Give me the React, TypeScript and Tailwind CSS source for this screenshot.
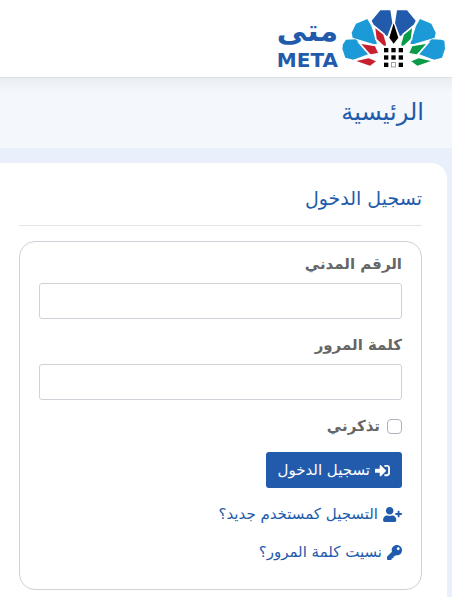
import { useState } from "react";
import { FaKey, FaSignInAlt, FaUserPlus } from "react-icons/fa";

function LogoMark() {
  return (
    <svg viewBox="240 27 312 177" className="h-[59px] w-[104px]" aria-hidden="true">
      {/* petals */}
      <g fill="#1b9ad7">
        <polygon points="241,146 243,133 252,119 281,118 322,153 325,158 318,163 274,179 250,173" />
        <polygon points="269,98 282,71 316,57 328,78 345,131 337,133 272,113" />
        <polygon points="549,146 547,122 538,119 509,118 468,153 465,158 472,163 516,179 540,173" />
        <polygon points="521,98 508,71 474,57 462,78 445,131 453,133 518,113" />
      </g>
      <g fill="#225bab">
        <polygon points="329,62 355,31 385,31 391,69 376,109 370,105 335,74" />
        <polygon points="461,62 435,31 405,31 399,69 414,109 420,105 455,74" />
      </g>
      {/* the white stroke sits behind the fill and keeps the shapes apart */}
      <g fill="#c8202f" stroke="#fff" strokeWidth="10" paintOrder="stroke">
        <polygon points="340,85 364,104 372,131 371,138 364,136 344,117" />
        <polygon points="298,132 339,139 348,159 326,163 319,156" />
        <polygon points="283,183 320,175 342,184 324,197" />
      </g>
      <g fill="#0a9b49" stroke="#fff" strokeWidth="10" paintOrder="stroke">
        <polygon points="450,85 426,104 418,131 419,138 426,136 446,117" />
        <polygon points="492,132 451,139 442,159 464,163 471,156" />
        <polygon points="507,183 470,175 448,184 466,197" />
      </g>
      <polygon points="395,70 409,113 395,131 382,113" fill="#000" />
      {/* windows */}
      {[366, 388, 410].map((x) =>
        [144, 166, 188].map((y) => (
          <rect
            key={`${x}-${y}`}
            x={x}
            y={y}
            width="13"
            height="13"
            fill={x === 388 && y === 188 ? "#fff" : "#000"}
            stroke={x === 388 && y === 188 ? "#777" : "none"}
            strokeWidth="2"
          />
        )),
      )}
    </svg>
  );
}

type FieldProps = {
  id: string;
  label: string;
  type: string;
  value: string;
  onChange: (value: string) => void;
};

function Field({ id, label, type, value, onChange }: FieldProps) {
  return (
    <div className="mb-[14px]">
      <label htmlFor={id} className="mb-[7px] block font-bold leading-6">
        {label}
      </label>
      <input
        id={id}
        type={type}
        value={value}
        onChange={(e) => onChange(e.target.value)}
        className="block h-9 w-full rounded-[3px] border border-[#ced2d9] bg-white px-3 outline-none focus:border-[#225bab]"
      />
    </div>
  );
}

export default function App() {
  const [civilId, setCivilId] = useState("");
  const [password, setPassword] = useState("");
  const [remember, setRemember] = useState(false);

  return (
    <div
      dir="rtl"
      lang="ar"
      className="min-h-screen bg-[#e9f0fc] font-['DejaVu_Sans',sans-serif] text-[15px] text-[#666]"
    >
      <header className="flex h-[78px] border-b border-[#dcdfe3] bg-white px-[6px] pt-[9px]">
        <a href="#" className="flex gap-1 text-[#225bab]">
          <LogoMark />
          <span className="flex flex-col pt-1 text-center font-bold">
            <span className="text-[30px] leading-[35px]">متى</span>
            <span dir="ltr" className="text-[20px] leading-6">META</span>
          </span>
        </a>
      </header>

      <div className="h-[70px] bg-[#f4f7fc] bg-linear-to-b from-[#e9edf2] to-[#f4f7fc] to-20% px-7 pt-4">
        <h1 className="text-2xl leading-9 text-[#225bab]">الرئيسية</h1>
      </div>

      <main className="mr-[5px] mt-[15px] rounded-tr-[16px] bg-white pb-2 pl-[19px] pr-[25px] pt-5">
        <h2 className="border-b border-[#e1e3e6] pb-3 text-[19px] leading-[30px] text-[#225bab]">
          تسجيل الدخول
        </h2>

        <form
          onSubmit={(e) => e.preventDefault()}
          className="mt-[15px] rounded-[16px] border border-[#ced2d9] px-[19px] pb-[25px] pt-[10px]"
        >
          <Field id="civil-id" label="الرقم المدني" type="text" value={civilId} onChange={setCivilId} />
          <Field id="password" label="كلمة المرور" type="password" value={password} onChange={setPassword} />

          <label className="flex items-center gap-[7px] font-bold leading-6">
            <input
              type="checkbox"
              checked={remember}
              onChange={(e) => setRemember(e.target.checked)}
              className="size-[15px] appearance-none rounded-[4px] border border-[#adb2bb] bg-white checked:bg-[#225bab]"
            />
            تذكرني
          </label>

          <button
            type="submit"
            className="mt-[14px] flex h-9 items-center gap-[5px] rounded-[3px] bg-[#225bab] px-3 text-white"
          >
            <FaSignInAlt className="size-[15px]" />
            تسجيل الدخول
          </button>

          <a href="#" className="mt-[14px] flex w-fit items-center gap-[5px] leading-6 text-[#225bab]">
            <FaUserPlus className="h-[15px] w-[19px]" />
            التسجيل كمستخدم جديد؟
          </a>
          <a href="#" className="mt-[14px] flex w-fit items-center gap-[5px] leading-6 text-[#225bab]">
            <FaKey className="size-[15px]" />
            نسيت كلمة المرور؟
          </a>
        </form>
      </main>
    </div>
  );
}
